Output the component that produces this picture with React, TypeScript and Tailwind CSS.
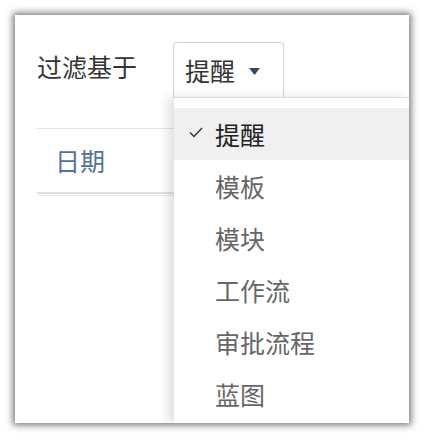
import React from 'react';

const items = ['提醒', '模板', '模块', '工作流', '审批流程', '蓝图'];

export default function App() {
  const selected = '提醒';

  return (
    <div
      className="w-[424px] h-[438px] bg-white p-[15px]"
      style={{ fontFamily: '"Noto Sans CJK SC", "Noto Sans", sans-serif' }}
    >
      <div className="relative w-[394px] h-[408px] bg-white overflow-hidden shadow-[0_0_7px_2px_rgba(0,0,0,0.55)]">
        {/* Header */}
        <div className="flex items-start pl-[22px] pt-[27px]">
          <span className="text-[25px] leading-none text-[#333] mt-[12px]">过滤基于</span>
          <div className="ml-[36px] w-[111px] h-[56px] flex items-center pl-[11px] border border-b-0 border-[#d4d4d4] rounded-t-[4px]">
            <span className="text-[25px] leading-none text-[#333]">提醒</span>
            <svg width="11" height="7" viewBox="0 0 11 7" className="ml-[14px] mt-[2px]">
              <path d="M0 0 L11 0 L5.5 7 Z" fill="#2f4b62" />
            </svg>
          </div>
        </div>

        {/* Table */}
        <div className="ml-[22px] mt-[30px]">
          <div className="h-px bg-[#e4e4e4]" />
          <div className="h-[63px] flex items-center pl-[18px]">
            <span className="text-[25px] leading-none text-[#52729a]">日期</span>
          </div>
          <div className="h-[2px] bg-[#e2e2e2]" />
          <div className="h-px mt-[1px] bg-[#e8e8e8]" />
        </div>

        {/* Dropdown menu */}
        <div className="absolute left-[159px] top-[82px] right-0 bottom-0 bg-white border-t border-[#dcdcdc] shadow-[-6px_0_10px_rgba(0,0,0,0.12)] pt-[10px]">
          {items.map((item) => {
            const isActive = item === selected;
            return (
              <div
                key={item}
                className={`h-[52px] flex items-center pl-[41px] relative ${isActive ? 'bg-[#f0f0f0]' : ''}`}
              >
                {isActive && (
                  <svg width="14" height="11" viewBox="0 0 14 11" className="absolute left-[15px] top-[19px]">
                    <path d="M1 5.5 L5 9.5 L13 1" fill="none" stroke="#333" strokeWidth="1.4" />
                  </svg>
                )}
                <span className={`text-[25px] leading-none ${isActive ? 'text-[#222]' : 'text-[#666]'}`}>{item}</span>
              </div>
            );
          })}
        </div>
      </div>
    </div>
  );
}
